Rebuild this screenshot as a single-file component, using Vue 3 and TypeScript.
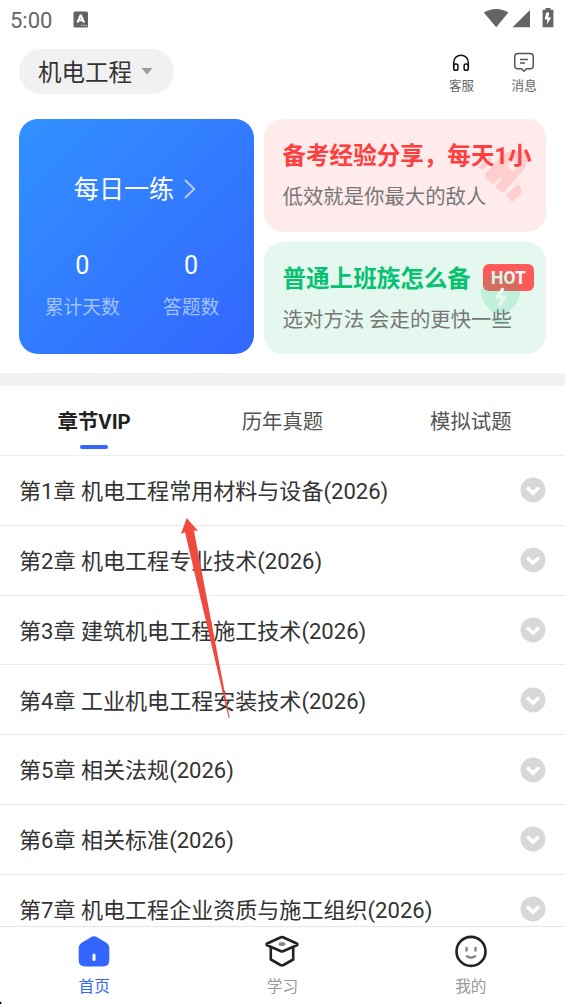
<script setup lang="ts">
interface Chapter {
  id: number
  title: string
}

const chapters: Chapter[] = [
  { id: 1, title: '机电工程常用材料与设备(2026)' },
  { id: 2, title: '机电工程专业技术(2026)' },
  { id: 3, title: '建筑机电工程施工技术(2026)' },
  { id: 4, title: '工业机电工程安装技术(2026)' },
  { id: 5, title: '相关法规(2026)' },
  { id: 6, title: '相关标准(2026)' },
  { id: 7, title: '机电工程企业资质与施工组织(2026)' },
]

const tabs: string[] = ['章节VIP', '历年真题', '模拟试题']
const stats = [
  { label: '累计天数', value: 0 },
  { label: '答题数', value: 0 },
]
</script>

<template>
  <div class="screen">
    <div class="status">
      <span class="time">5:00</span>
      <svg class="ime" width="16" height="17" viewBox="0 0 16 17">
        <rect x="0.5" y="0.5" width="14.5" height="16" rx="1.5" fill="#626262" />
        <path d="M4.500 11.500 7.500 4.500H8L11 11.500M5.800 9.300H9.700" fill="none" stroke="#fff" stroke-width="2.100" />
        <path d="M8 14.300H14" stroke="#ccc" stroke-width="1.200" stroke-dasharray="1 .7" />
      </svg>
      <svg class="signals" width="72" height="22" viewBox="0 0 72 22">
        <path d="M0.800 4.500C8-.3 18.400-.3 25.400 4.500L13.200 19.200Z" fill="#646464" />
        <path d="M29.500 19.200 47 2V19.200Z" fill="#646464" />
        <path d="M62.500 0H67.500V1.800H70.400V19.200H59.600V1.800H62.500Z" fill="#646464" />
        <path d="M66.200 4.500H63.200L61.700 11.500H64.400L63.700 16.800 68.300 9.500H65.300Z" fill="#fff" />
      </svg>
    </div>

    <header class="header">
      <div class="subject">
        <span>机电工程</span>
        <svg width="12" height="7" viewBox="0 0 12 7"><path d="M.5 0H11.500L6 6.500Z" fill="#999" /></svg>
      </div>
      <div class="action">
        <svg width="24" height="24" viewBox="0 0 24 24" fill="none" stroke="#111" stroke-width="1.500">
          <path d="M4.700 16.500V11.500A7.300 7.300 0 0 1 19.300 11.500V16.500" />
          <rect x="4.700" y="13" width="4.200" height="6.300" rx="1.800" />
          <rect x="15.100" y="13" width="4.200" height="6.300" rx="1.800" />
        </svg>
        <span>客服</span>
      </div>
      <div class="action">
        <svg width="24" height="24" viewBox="0 0 24 24" fill="none" stroke="#555" stroke-width="1.500">
          <path d="M6 2.500H18Q21.300 2.500 21.300 5.800V14.500Q21.300 17.800 18 17.800H14.500L12 20.200 9.500 17.800H6Q2.700 17.800 2.700 14.500V5.800Q2.700 2.500 6 2.500Z" />
          <path d="M8 8.400H16M8 12.100H13" />
        </svg>
        <span>消息</span>
      </div>
    </header>

    <section class="cards">
      <div class="daily">
        <div class="daily-title">
          <span>每日一练</span>
          <svg width="12" height="20" viewBox="0 0 12 20"><path d="M1 1 10.300 10 1 19" fill="none" stroke="#c0cdec" stroke-width="1.800" /></svg>
        </div>
        <div class="stats">
          <div v-for="s in stats" :key="s.label" class="stat">
            <b>{{ s.value }}</b>
            <span>{{ s.label }}</span>
          </div>
        </div>
      </div>
      <div class="side">
        <div class="promo red">
          <svg class="mark" width="60" height="60" viewBox="0 0 60 60" fill="#ffcfd0">
            <path fill-rule="evenodd" d="M31 6Q40 0 54 3Q56 3 56.500 6Q58 17 47 27L33 43Q32 44 30 43L15 29Q13 27 15 24ZM42 12.300A4.700 4.700 0 1 0 42 21.700A4.700 4.700 0 1 0 42 12.300Z" />
            <path d="M7 18 18 8Q20 8 21 10L14 19Q13 21 10 20ZM47 35Q53 41 49 46L41 53 35 46Z" />
            <path d="M22.500 37.500 29 30" stroke="#ffebec" stroke-width="2.600" stroke-linecap="round" />
          </svg>
          <h3>备考经验分享，每天1小</h3>
          <p>低效就是你最大的敌人</p>
        </div>
        <div class="promo green">
          <h3>普通上班族怎么备<em>HOT</em></h3>
          <p>选对方法 会走的更快一些</p>
          <svg class="mark" width="60" height="60" viewBox="0 0 60 60">
            <path d="M26.500 4A19.500 19.500 0 0 1 46 23.500Q46 33 37 40Q34 44.500 31 44.500H22Q19 44.500 16 40Q7 33 7 23.500A19.500 19.500 0 0 1 26.500 4ZM19 48.500Q26.500 50.500 34 48.500Q34 54.500 26.500 54.500Q19 54.500 19 48.500Z" fill="#0cc37b" fill-opacity=".17" />
            <path d="M28.500 20.500 23.500 28H30.500L26 35.500" fill="none" stroke="#e5f8ef" stroke-width="3.500" stroke-linejoin="round" stroke-linecap="round" />
          </svg>
        </div>
      </div>
    </section>

    <div class="divider"></div>

    <nav class="tabs">
      <div v-for="(tab, i) in tabs" :key="tab" class="tab" :class="{ active: i === 0 }">{{ tab }}</div>
    </nav>

    <main class="list">
      <div v-for="c in chapters" :key="c.id" class="row">
        <span>第{{ c.id }}章 {{ c.title }}</span>
        <svg width="26" height="26" viewBox="0 0 26 26">
          <circle cx="13" cy="13" r="12.500" fill="#d8d8d8" />
          <path d="M7 10.500 13 16 19 10.500" fill="none" stroke="#fff" stroke-width="3.600" />
        </svg>
      </div>
    </main>

    <footer class="bottom">
      <div class="item on">
        <svg width="36" height="36" viewBox="0 0 36 36">
          <path d="M14.500 3.500Q18 1.200 21.500 3.500L30 8.500Q33.300 10.500 33.300 14.500V26Q33.300 32.500 27 32.500H9Q2.700 32.500 2.700 26V14.500Q2.700 10.500 6 8.500Z" fill="#3366ff" />
          <path d="M18 21V25.500" stroke="#fff" stroke-width="3" stroke-linecap="round" />
        </svg>
        <span>首页</span>
      </div>
      <div class="item">
        <svg width="36" height="36" viewBox="0 0 36 36" fill="none" stroke="#222" stroke-width="2.600" stroke-linejoin="round">
          <path d="M17 3.200Q18 2.800 19 3.200L33.300 9.800V11L19 17.200Q18 17.600 17 17.200L2.700 11V9.800Z" />
          <path d="M6.800 13V25.500L16.500 31Q18 31.700 19.500 31L29.200 25.500V13" />
          <ellipse cx="18" cy="10" rx="3.500" ry="2" fill="#888" stroke="none" />
        </svg>
        <span>学习</span>
      </div>
      <div class="item">
        <svg width="36" height="36" viewBox="0 0 36 36" fill="none" stroke-linecap="round">
          <circle cx="18" cy="17.400" r="14.500" stroke="#222" stroke-width="2.600" />
          <path d="M13.500 14V16.500M22.500 14V16.500M14 22.300Q18 25 22 22.300" stroke="#888" stroke-width="2.500" />
        </svg>
        <span>我的</span>
      </div>
    </footer>

    <svg class="pointer" width="62" height="204" viewBox="0 0 62 204">
      <path d="M16.700 2 28 15 23.900 14.500 59.700 202H58.700L15 16.300 11 18Z" fill="#f04a3e" />
    </svg>
    <i class="corner"></i>
  </div>
</template>

<style>
body {
  margin: 0;
  background: #fff;
}
</style>

<style scoped>
.screen {
  position: relative;
  display: flex;
  flex-direction: column;
  width: 565px;
  height: 1004px;
  overflow: hidden;
  background: #fff;
  color: #333;
  font-family: Roboto, "Noto Sans CJK SC", sans-serif;
}
.status {
  display: flex;
  align-items: center;
  height: 40px;
  padding: 0 10px;
  box-sizing: border-box;
}
.time {
  width: 63px;
  font-size: 22px;
  color: #666;
}
.ime {
  margin-top: -2px;
}
.signals {
  margin: -2px 0 0 auto;
}
.header {
  display: flex;
  height: 79px;
  padding: 9px 9.500px 0 19px;
  box-sizing: border-box;
}
.subject {
  display: flex;
  align-items: center;
  gap: 9px;
  width: 155px;
  height: 45px;
  margin-right: auto;
  padding-left: 19px;
  box-sizing: border-box;
  border-radius: 23px;
  background: #f1f1f1;
  font-size: 23.5px;
}
.subject span {
  padding-bottom: 1px;
}
.action {
  display: flex;
  flex-direction: column;
  align-items: center;
  width: 62.700px;
  padding-top: 1.500px;
  color: #666;
  font-size: 12.550px;
  line-height: 21px;
}
.cards {
  display: flex;
  gap: 10px;
  height: 254px;
  padding: 0 19px;
}
.daily {
  width: 235px;
  height: 235px;
  border-radius: 19px;
  background: linear-gradient(135deg, #3191ff, #3366ff);
  color: #fff;
}
.daily-title {
  display: flex;
  justify-content: center;
  align-items: center;
  gap: 10px;
  height: 38px;
  margin-top: 50px;
  padding-right: 3px;
  font-size: 25.1px;
}
.daily-title span {
  padding-bottom: 3px;
}
.daily-title svg {
  margin-top: 1px;
}
.stats {
  display: flex;
  justify-content: center;
  gap: 43px;
  margin-top: 38px;
  padding-right: 9px;
}
.stat {
  display: flex;
  flex-direction: column;
  align-items: center;
  color: #a3c3ff;
  font-size: 18.8px;
  line-height: 42px;
}
.stat b {
  color: #fff;
  font-weight: 400;
  font-size: 25.1px;
}
.side {
  display: flex;
  flex-direction: column;
  gap: 10px;
  width: 282px;
}
.promo {
  position: relative;
  height: 112.500px;
  padding: 15px 0 0 18.500px;
  box-sizing: border-box;
  border-radius: 19px;
  white-space: nowrap;
}
.promo h3 {
  position: relative;
  display: flex;
  align-items: center;
  gap: 12px;
  height: 40px;
  margin: 0 0 3px;
  font-size: 23.55px;
  font-weight: 700;
}
.promo p {
  position: relative;
  margin: 0;
  font-size: 20.4px;
  line-height: 40px;
  color: #777;
}
.red {
  background: #ffebec;
}
.red h3 {
  color: #ff3e3e;
}
.green {
  background: #e5f8ef;
}
.green h3 {
  color: #06c270;
}
.green em {
  width: 51px;
  height: 27px;
  margin-top: 2px;
  border-radius: 6px;
  background: #ff5a5a;
  color: #fff;
  font-style: normal;
  font-size: 17.5px;
  line-height: 29px;
  text-align: center;
}
.mark {
  position: absolute;
  right: 15px;
  top: 30px;
}
.green .mark {
  right: 12px;
  top: 27px;
}
.divider {
  height: 13px;
  background: #f1f1f1;
}
.tabs {
  display: flex;
  height: 70px;
  box-sizing: border-box;
  border-bottom: 1px solid #eee;
}
.tab {
  position: relative;
  flex: 1;
  text-align: center;
  font-size: 20.4px;
  line-height: 72px;
  color: #555;
}
.active {
  color: #222;
  font-weight: 700;
}
.active::after {
  content: "";
  position: absolute;
  left: 50%;
  top: 58.500px;
  width: 28px;
  height: 4px;
  margin-left: -14px;
  border-radius: 2px;
  background: #3366ff;
}
.list {
  height: 470px;
  overflow: hidden;
}
.row {
  display: flex;
  align-items: center;
  justify-content: space-between;
  height: 69.800px;
  padding: 0 19px;
  box-sizing: border-box;
  border-bottom: 1px solid #eaeaea;
  font-size: 22.050px;
}
.row span {
  padding-bottom: 2.400px;
}
.bottom {
  display: flex;
  height: 78px;
  box-sizing: border-box;
  border-top: 1px solid #e5e5e5;
  background: #fff;
}
.item {
  flex: 1;
  display: flex;
  flex-direction: column;
  align-items: center;
  padding-top: 7px;
  font-size: 15.7px;
  line-height: 34px;
  color: #999;
}
.on {
  color: #3366ff;
}
.pointer {
  position: absolute;
  left: 170px;
  top: 516px;
}
.corner {
  position: absolute;
  left: 0;
  bottom: 0;
  width: 2px;
  height: 3px;
  background: #000;
  clip-path: polygon(0 0, 100% 100%, 0 100%);
}
</style>
